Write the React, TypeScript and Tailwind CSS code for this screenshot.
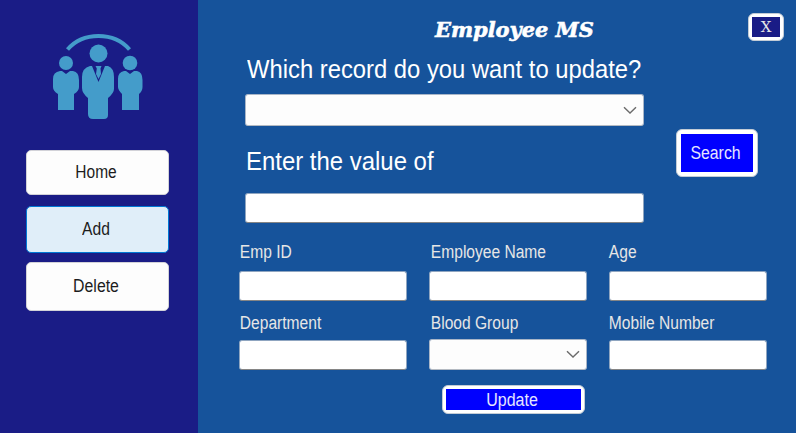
import type { ReactNode } from 'react';

const sans = "font-['Liberation_Sans',Arial,sans-serif]";

function Chevron() {
  return (
    <svg width="14" height="9" viewBox="0 0 14 9" fill="none" stroke="#6b6b6b" strokeWidth="1.4">
      <path d="M1 1.2 L7 7 L13 1.2" />
    </svg>
  );
}

function TextBox({ className = '' }: { className?: string }) {
  return <div className={`rounded-[3px] border border-[#8fa5c0] border-b-[#858585] bg-white ${className}`} />;
}

function ComboBox({ className = '' }: { className?: string }) {
  return (
    <div className={`flex items-center justify-end rounded-[3px] border border-[#a9b6c8] border-b-[#b4bac2] bg-[#fdfdfd] pr-1.5 ${className}`}>
      <Chevron />
    </div>
  );
}

function Label({ children, className = '' }: { children: ReactNode; className?: string }) {
  return (
    <span className={`block h-5 origin-left scale-x-[0.865] whitespace-nowrap pl-px text-[18px] leading-5 text-[#e6e6e6] ${className}`}>{children}</span>
  );
}

function NavButton({ children, className, textClass }: { children: ReactNode; className: string; textClass: string }) {
  return (
    <button className={`flex w-[143px] items-center justify-center rounded-[5px] border text-[18px] text-[#1c1c1c] ${className}`}>
      <span className={`whitespace-nowrap ${textClass}`}>{children}</span>
    </button>
  );
}

function FramedButton({ children, className, faceClass }: { children: ReactNode; className: string; faceClass: string }) {
  return (
    <button className={`flex rounded-[6px] border border-[#c3ccd6] bg-white ${className}`}>
      <span className={`flex h-full w-full items-center justify-center ${faceClass}`}>{children}</span>
    </button>
  );
}

function TeamLogo() {
  return (
    <svg className="ml-[53px]" width="90" height="86" viewBox="0 0 90 86" fill="#449cca">
      <path d="M14.500 16.500 C30 -1.500 61 -1.500 76.500 16.500" fill="none" stroke="#449cca" strokeWidth="4" />
      <circle cx="13" cy="30" r="7" />
      <path d="M7 38 H9 L13 41 L17 38 H20 Q26 39 26 47 V54 Q26 58 21 61 V77 H5 V61 Q0 58 0 54 V46 Q0 39 7 38Z" />
      <circle cx="77" cy="30" r="7.300" />
      <path d="M71 38 H73 L77 41 L81 38 H84 Q89.500 39 89.500 47 V54 Q89.500 58 86 61 V77 H69 V61 Q65 57 65 54 V46 Q65 39 71 38Z" />
      <circle cx="45.500" cy="20.500" r="9" />
      <path d="M37 33 H39 L45.500 49 L52 33 H55 Q61 35 61 44 V56 Q61 60 55 65 V82 Q55 86 51 86 H40 Q35 86 35 81 V65 Q29 60 29 55 V44 Q29 35 37 33Z" />
      <path d="M42.500 33 H48.500 L47.500 35.500 L48 41 L45.500 46 L43 41 L43.800 35.500Z" />
    </svg>
  );
}

export default function App() {
  return (
    <div className={`flex h-[433px] w-[796px] overflow-hidden bg-[#16539b] ${sans}`}>
      <aside className="w-[198px] shrink-0 bg-[#1a1c86] pt-[33px]">
        <TeamLogo />
        <nav className="mt-[31px] flex flex-col pl-[26px]">
          <NavButton className="h-[45px] border-[#d2d2d8] bg-[#fdfdfd] pr-0.5" textClass="scale-x-[0.86]">Home</NavButton>
          <NavButton className="mt-[11px] h-[47px] border-[#0078d4] bg-[#e0eef9] pr-0.5" textClass="scale-x-[0.87]">Add</NavButton>
          <NavButton className="mt-[9px] h-[49px] border-[#d2d2d8] bg-[#fdfdfd] pr-[3px]" textClass="scale-x-[0.88]">Delete</NavButton>
        </nav>
      </aside>

      <main className="flex w-[598px] flex-col pt-[13px]">
        <header className="flex h-7 items-start">
          <h1 className="ml-[237px] w-[313px] whitespace-nowrap pt-1 font-['DejaVu_Serif',serif] text-[21px] font-bold italic leading-[26px] text-white">
            <span className="inline-block origin-left scale-x-[0.995] [-webkit-text-stroke:0.6px_white]">Employee MS</span>
          </h1>
          <FramedButton className="h-[28px] w-[36px] p-[3px]" faceClass="bg-[#1a1c86] font-['DejaVu_Serif',serif] text-[15px] leading-none text-[#e6e6e6]">
            X
          </FramedButton>
        </header>

        <section className="flex">
          <div className="ml-[47px] w-[399px]">
            <div className="mt-[14px] h-[29px] whitespace-nowrap pl-0.5 text-[25px] leading-[29px] text-white">
              <span className="inline-block origin-left scale-x-[0.952]">Which record do you want to update?</span>
            </div>
            <ComboBox className="mt-[10px] h-[32px]" />
            <div className="mt-[21px] h-[29px] whitespace-nowrap pl-px text-[25px] leading-[29px] text-white">
              <span className="inline-block origin-left scale-x-[0.957]">Enter the value of</span>
            </div>
            <TextBox className="mt-[17px] h-[30px]" />
          </div>
          <FramedButton className="ml-8 mt-[88px] h-[48px] w-[82px] p-1" faceClass="bg-[#0000ff] pr-0.5 text-[18px] text-[#e6e6ff]">
            <span className="scale-x-[0.88]">Search</span>
          </FramedButton>
        </section>

        <section className="ml-[41px] mt-[19px] grid grid-cols-[168px_158px_158px] gap-x-[22px]">
          <Label>Emp ID</Label>
          <Label className="ml-px">Employee Name</Label>
          <Label className="-ml-px">Age</Label>
          <TextBox className="mt-[9px] h-[30px]" />
          <TextBox className="mt-[9px] h-[30px]" />
          <TextBox className="mt-[9px] h-[30px]" />
          <Label className="mt-[12px]">Department</Label>
          <Label className="ml-px mt-[12px]">Blood Group</Label>
          <Label className="-ml-px mt-[12px]">Mobile Number</Label>
          <TextBox className="mt-[7px] h-[30px]" />
          <ComboBox className="mt-[6px] h-[31px]" />
          <TextBox className="mt-[7px] h-[30px]" />
        </section>

        <FramedButton className="ml-[244px] mt-[15px] h-[29px] w-[143px] p-[3px]" faceClass="bg-[#0000ff] pr-[3px] text-[18px] leading-none text-[#e6e6ff]">
          <span className="scale-x-[0.89]">Update</span>
        </FramedButton>
      </main>
    </div>
  );
}
